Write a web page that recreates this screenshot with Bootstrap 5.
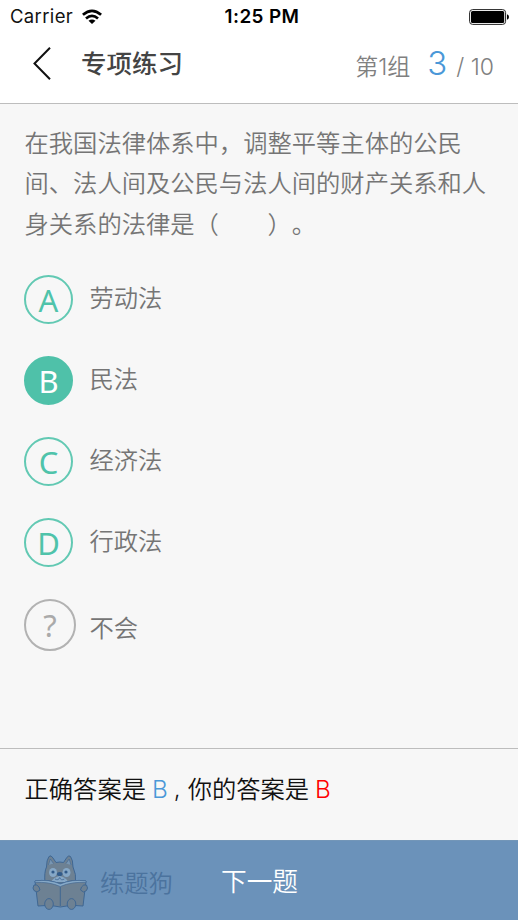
<!DOCTYPE html>
<html lang="zh-CN">
<head>
<meta charset="utf-8">
<meta name="viewport" content="width=device-width, initial-scale=1">
<title>专项练习</title>
<link href="https://cdn.jsdelivr.net/npm/bootstrap@5.3.0/dist/css/bootstrap.min.css" rel="stylesheet">
<style>
body{font-family:"Noto Sans CJK SC",sans-serif;font-weight:350;background:#f7f7f7;color:#757575;font-size:24.3px;line-height:40.3px;text-spacing-trim:space-all}
.latin{font-family:Inter,"Liberation Sans",sans-serif}
.screen{height:920px;overflow:hidden}
.top-area{height:104px;border-bottom:1px solid #bdbdbd;background:#fff}
.status{height:33px;color:#111;font-size:18.5px;line-height:33px;padding:0 9px 0 10px}
.status>*{flex:1 1 0}
.carrier{letter-spacing:.35px;font-weight:400}
.clock{font-weight:600;letter-spacing:.4px;font-size:18.9px;color:#000;padding-left:5px}
.titlebar{height:70px;padding:0 24px 0 33px}
.title-text{font-size:25.5px;line-height:40px;font-weight:500;color:#444;margin-left:30px;padding-bottom:12px}
.counter{font-size:23px;line-height:40px;color:#808080;padding-bottom:6px}
.current{font-size:33px;color:#4a98d8;margin:0 9px 0 17px}
.question{padding:18px 25px 0 24.5px;height:171px;margin:0}
.option{height:49px;margin:0 0 32px 24px}
.option-label{line-height:40px;padding-bottom:6px}
.ring{width:49px;height:49px;border:2px solid #62c9b3;color:#4fc3aa;font:400 31px/46px "Noto Sans",sans-serif;margin-right:16.5px}
.ring.chosen{background:#4fc1a9;border-color:#4fc1a9;color:#fff}
.ring.unsure{width:52px;height:52px;border-color:#b2b2b2;color:#aaa;margin-right:13.5px;line-height:48px}
.option.last-option{height:52px}
.option.last-option .option-label{padding:4px 0 0}
.answer{height:92px;border-top:1px solid #bdbdbd;color:#111;padding:19px 24.5px}
.ans-right{color:#4a98d8;margin-left:6px}
.ans-comma{margin:0 7px 0 6px}
.ans-mine{color:#f00;margin-left:6px}
.ans-right,.ans-mine{padding-top:1px}
.bottom-bar{height:80px;background:#6b92ba;border-top:1px solid #7396b8}
.brand-box{padding-left:32px;width:221px}
.brand-text{color:#4b739e;font-size:24.3px;margin-left:12px;padding-top:4px}
.next-text{color:#fff;font-size:25.7px}
</style>
</head>
<body>
<main class="screen d-flex flex-column">
  <header class="top-area flex-shrink-0">
    <div class="status d-flex align-items-center latin">
      <div class="d-flex align-items-center"><span class="carrier">Carrier</span>
        <svg class="ms-2" width="22" height="16" viewBox="0 0 21 16" fill="none" stroke="#000" stroke-width="2.7"><path d="M1.400 5.800Q10.500-2.200 19.600 5.800M4.500 9.400Q10.500 4.200 16.500 9.400"/><path d="M7 11.700q3.500-2.400 7 0L10.500 15z" fill="#000" stroke="none"/></svg>
      </div>
      <div class="clock text-center">1:25 PM</div>
      <div class="d-flex justify-content-end">
        <svg width="40" height="16" viewBox="0 0 40 16"><rect x=".6" y=".6" width="36" height="14.800" rx="3" fill="#fff" stroke="#222"/><rect x="2" y="2" width="33.200" height="12" rx="1.600"/><path d="M38 5.200q2 .8 2 2.800t-2 2.800z"/></svg>
      </div>
    </div>
    <nav class="titlebar d-flex align-items-center">
      <svg class="mb-2" width="18" height="34" viewBox="0 0 18 34" fill="none" stroke="#111" stroke-width="2"><path d="M17 .8 1.500 16.500 17 32.300"/></svg>
      <div class="title-text">专项练习</div>
      <div class="counter ms-auto d-flex align-items-baseline"><span>第<span class="latin">1</span>组</span><span class="current latin">3</span><span class="latin">/ 10</span></div>
    </nav>
  </header>
  <p class="question">在我国法律体系中，调整平等主体的公民<br>间、法人间及公民与法人间的财产关系和人<br>身关系的法律是（　　）。</p>
  <section>
    <div class="option d-flex align-items-center"><div class="ring rounded-circle text-center">A</div><div class="option-label">劳动法</div></div>
    <div class="option d-flex align-items-center"><div class="ring chosen rounded-circle text-center">B</div><div class="option-label">民法</div></div>
    <div class="option d-flex align-items-center"><div class="ring rounded-circle text-center">C</div><div class="option-label">经济法</div></div>
    <div class="option d-flex align-items-center"><div class="ring rounded-circle text-center">D</div><div class="option-label">行政法</div></div>
    <div class="option last-option d-flex align-items-center"><div class="ring unsure rounded-circle text-center">?</div><div class="option-label">不会</div></div>
  </section>
  <section class="answer mt-auto flex-shrink-0 d-flex"><span>正确答案是</span><span class="latin ans-right">B</span><span class="latin ans-comma">,</span><span>你的答案是</span><span class="latin ans-mine">B</span></section>
  <footer class="bottom-bar flex-shrink-0 d-flex align-items-center">
    <div class="brand-box d-flex align-items-center">
      <svg class="mt-1" width="56" height="56" viewBox="0 0 56 56" fill="#6d8193" stroke="#3f6793" stroke-width="1" stroke-linejoin="round">
        <path d="M13 28Q12 17 14.500 12Q14.500 5 17 1.500q2-2 4 1.500l3 4.500q4-1 7.500 0l3-4.500q2-3.500 4-1.500 2.500 3.500 2.500 10.500 3.500 7 2.500 16z"/>
        <path d="M16.500 10l1.800-6 3.200 4.500M39 10l-1.800-6-3.200 4.500" fill="#7896b2" stroke-width=".6"/>
        <ellipse cx="21" cy="17.500" rx="4" ry="4.500" fill="#86a8c7" stroke="none"/>
        <ellipse cx="34.500" cy="17.500" rx="4" ry="4.500" fill="#86a8c7" stroke="none"/>
        <path d="M19 27q3-5 8.700-6 5.700 1 8.700 6z" fill="#86a8c7" stroke="none"/>
        <circle cx="21" cy="17" r="1.600" fill="#315b8a" stroke="none"/><circle cx="34" cy="17" r="1.600" fill="#315b8a" stroke="none"/>
        <ellipse cx="27.700" cy="19" rx="2.800" ry="2" fill="#315b8a" stroke="none"/>
        <path d="M23 24q3.500 2 4.700-1.500 1.200 3.500 4.700 1.500" fill="none" stroke-width=".8"/>
        <path d="M3 26q14-2 25.300 3 11.700-5 25.700-3l-3 25q-12-2-22.700 1-10.300-3-22.300-1z"/>
        <path d="M3 26q14-2 25.300 3 11.700-5 25.700-3v1.500q-14-1-25.700 4-11.300-5-25.300-4z" fill="#88abc9" stroke-width=".6"/>
        <path d="M28.300 32v19" fill="none"/>
        <path d="M2 30q3-1 5 2l1 3-3 2q-4-1-4-4zM54.500 30q-3-1-5 2l-1 3 3 2q4-1 4-4z"/>
        <ellipse cx="17" cy="49" rx="4.300" ry="5.400"/><ellipse cx="39.500" cy="49" rx="4.300" ry="5.400"/>
      </svg>
      <div class="brand-text">练题狗</div>
    </div>
    <div class="next-text">下一题</div>
  </footer>
</main>
<script src="https://cdn.jsdelivr.net/npm/bootstrap@5.3.0/dist/js/bootstrap.bundle.min.js"></script>
</body>
</html>
